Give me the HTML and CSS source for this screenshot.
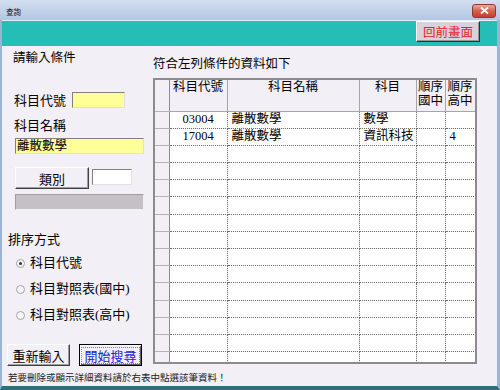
FILE: index.html
```html
<!DOCTYPE html>
<html lang="zh-Hant">
<head>
    <meta charset="UTF-8">
    <title>查詢</title>
    <link rel="stylesheet" href="styles.css">
</head>
<body>
    <div class="window">
        <div class="titlebar">
            <span class="title">查詢</span>
            <span class="close">
                <svg width="9" height="7" viewBox="0 0 9 7"><path d="M1 0.5 L8 6.5 M8 0.5 L1 6.5" stroke="#fff" stroke-width="1.8"/></svg>
            </span>
        </div>
        <div class="client">
            <div class="toolbar">
                <button class="back-btn">回前畫面</button>
            </div>
            <div class="main">
                <div class="left">
                    <div class="cond-title">請輸入條件</div>
                    <div class="code-row">
                        <span>科目代號</span>
                        <span class="input code-input"></span>
                    </div>
                    <div class="name-label">科目名稱</div>
                    <div class="input name-input">離散數學</div>
                    <div class="cat-row">
                        <button class="btn cat-btn">類別</button>
                        <span class="white-box"></span>
                    </div>
                    <div class="gray-bar"></div>
                    <div class="sort-title">排序方式</div>
                    <div class="radios">
                        <div class="radio"><span class="dot checked"></span>科目代號</div>
                        <div class="radio"><span class="dot"></span>科目對照表(國中)</div>
                        <div class="radio"><span class="dot"></span>科目對照表(高中)</div>
                    </div>
                    <div class="actions">
                        <button class="btn action-btn">重新輸入</button>
                        <button class="btn action-btn search-btn"><span>開始搜尋</span></button>
                    </div>
                </div>
                <div class="right">
                    <div class="result-title">符合左列條件的資料如下</div>
                    <div class="grid">
                        <table>
                            <colgroup>
                                <col style="width:14px">
                                <col style="width:58px">
                                <col style="width:132px">
                                <col style="width:57px">
                                <col style="width:29px">
                                <col style="width:30px">
                            </colgroup>
                            <thead>
                                <tr>
                                    <th class="sel"></th>
                                    <th>科目代號</th>
                                    <th>科目名稱</th>
                                    <th>科目</th>
                                    <th>順序<br>國中</th>
                                    <th>順序<br>高中</th>
                                </tr>
                            </thead>
                            <tbody id="rows"></tbody>
                        </table>
                    </div>
                </div>
            </div>
            <div class="footer">若要刪除或顯示詳細資料請於右表中點選該筆資料！</div>
        </div>
    </div>
    <script>
        const data = [
            ['03004', '離散數學', '數學', '', ''],
            ['17004', '離散數學', '資訊科技', '', '4']
        ];
        const tbody = document.getElementById('rows');
        for (let i = 0; i < 15; i++) {
            const row = data[i] || ['', '', '', '', ''];
            const tr = document.createElement('tr');
            tr.innerHTML = '<td class="sel"></td>' +
                `<td class="num">${row[0]}</td>` +
                `<td>${row[1]}</td>` +
                `<td>${row[2]}</td>` +
                `<td>${row[3]}</td>` +
                `<td>${row[4]}</td>`;
            tbody.appendChild(tr);
        }
    </script>
</body>
</html>
```

FILE: styles.css
```css
body {
    margin: 0;
    font-family: "Liberation Serif", "Noto Sans CJK TC", serif;
    color: #000;
}

.window {
    width: 500px;
    height: 390px;
    background: #a9bfdc;
    display: flex;
    flex-direction: column;
    overflow: hidden;
}

.titlebar {
    height: 20px;
    flex-shrink: 0;
    display: flex;
    align-items: center;
    justify-content: space-between;
    padding: 0 4px 0 6px;
    background: linear-gradient(#d3dff0, #b3c6e2);
    box-sizing: border-box;
}

.title {
    font-family: "Noto Sans CJK TC", sans-serif;
    font-size: 7.5px;
    color: #1a1a1a;
    margin-top: 2px;
}

.close {
    width: 24px;
    height: 14px;
    flex-shrink: 0;
    margin-top: 1px;
    border: 1px solid #8a3a32;
    border-radius: 3px;
    box-sizing: border-box;
    background: linear-gradient(#eba899, #d5604e 50%, #c4402e);
    display: flex;
    align-items: center;
    justify-content: center;
}

.client {
    height: 370px;
    flex-shrink: 0;
    display: flex;
    flex-direction: column;
    background: #f3eff7;
    border-left: 2px solid #9cb4d2;
    border-right: 3px solid #9cb4d2;
    border-bottom: 4px solid #2f6f7c;
    box-sizing: border-box;
}

.toolbar {
    height: 26px;
    flex-shrink: 0;
    background: #26bdb7;
    border-top: 1px solid #e6eef8;
    box-sizing: border-box;
    display: flex;
    justify-content: flex-end;
    padding: 0 17px 0 0;
}

.back-btn {
    width: 64px;
    height: 21px;
    padding: 0;
    font-family: "Noto Sans CJK TC", sans-serif;
    font-size: 12.5px;
    color: #e8202a;
    background: #dad2da;
    border: 1px solid;
    border-color: #fff #303030 #303030 #fff;
    box-shadow: inset -1px -1px #9a949a;
}

.main {
    height: 322px;
    flex-shrink: 0;
    display: flex;
}

.left {
    width: 151px;
    flex-shrink: 0;
    font-size: 13px;
    line-height: 16px;
}

.cond-title {
    margin: 4px 0 0 11px;
    font-size: 12.5px;
}

.code-row {
    margin-top: 24px;
    padding-left: 12px;
    display: flex;
    align-items: center;
}

.code-row span:first-child {
    margin-top: 3px;
}

.input {
    background: #ffff99;
    border: 1px solid;
    border-color: #808080 #e0e0e0 #e0e0e0 #808080;
    box-sizing: border-box;
    height: 16px;
}

.code-input {
    width: 53px;
    margin-left: 6px;
}

.name-label {
    margin: 9px 0 0 12px;
}

.name-input {
    width: 129px;
    margin: 4px 0 0 13px;
    font-size: 12.5px;
    line-height: 14px;
    padding-left: 1px;
}

.cat-row {
    margin: 13px 0 0 13px;
    display: flex;
    align-items: flex-start;
}

.btn {
    height: 22px;
    padding: 0;
    font-family: "Noto Sans CJK TC", sans-serif;
    font-size: 13px;
    color: #000;
    background: #f3eff7;
    border: 1px solid;
    border-color: #fff #404040 #404040 #fff;
    box-shadow: inset -1px -1px #a09ca4;
}

.cat-btn {
    width: 74px;
}

.white-box {
    width: 40px;
    height: 16px;
    margin: 2px 0 0 3px;
    background: #fff;
    border: 1px solid;
    border-color: #808080 #e0e0e0 #e0e0e0 #808080;
    box-sizing: border-box;
}

.gray-bar {
    width: 129px;
    height: 16px;
    margin: 5px 0 0 13px;
    background: #c4c0c6;
    border: 1px solid;
    border-color: #a09ca4 #f0f0f0 #f0f0f0 #a09ca4;
    box-sizing: border-box;
}

.sort-title {
    margin: 22px 0 0 6px;
}

.radios {
    margin-top: 2px;
}

.radio {
    height: 26px;
    display: flex;
    align-items: center;
    padding-left: 14px;
}

.dot {
    width: 9px;
    height: 9px;
    margin-right: 5px;
    border: 1px solid #a4a4a4;
    border-radius: 50%;
    box-sizing: border-box;
    background: #f6f6f6;
    position: relative;
}

.dot.checked::after {
    content: "";
    position: absolute;
    left: 2px;
    top: 2px;
    width: 3px;
    height: 3px;
    border-radius: 50%;
    background: #303030;
}

.actions {
    margin: 16px 0 0 5px;
    display: flex;
    gap: 9px;
}

.action-btn {
    width: 63px;
}

.search-btn {
    color: #2020d8;
    border-color: #000;
    box-shadow: inset 1px 1px #fff, inset -1px -1px #606060;
}

.search-btn span {
    display: inline-block;
    padding: 0 2px;
    line-height: 15px;
    border: 1px dotted #8a8a20;
}

.right {
    flex: 1;
}

.result-title {
    margin-top: 10px;
    font-size: 12.5px;
    line-height: 16px;
}

.grid {
    margin-top: 6px;
    width: 324px;
    height: 286px;
    border: 2px solid #8c8c8c;
    box-sizing: border-box;
    overflow: hidden;
    background: #f3eff7;
}

table {
    width: 320px;
    table-layout: fixed;
    border-collapse: collapse;
    font-size: 12.5px;
}

thead tr {
    height: 31px;
}

th {
    padding: 1px 0 0;
    vertical-align: top;
    font-weight: normal;
    line-height: 13.5px;
    background: #f3eff7;
    border: 1px solid #a8a4ac;
    border-top: none;
}

th:first-child {
    border-left: none;
}

tbody tr {
    height: 17.2px;
}

td {
    padding: 0 0 0 4px;
    line-height: 15px;
    background: #fff;
    border: 1px dotted #6e6e6e;
    white-space: nowrap;
    overflow: hidden;
}

td.num {
    text-align: center;
    padding: 0;
}

td.sel,
th.sel {
    background: #f3eff7;
    border: none;
    border-right: 1px solid #8c8c8c;
    border-bottom: 1px solid #b4b0b8;
}

.footer {
    height: 18px;
    flex-shrink: 0;
    padding-left: 6px;
    font-family: "Noto Sans CJK TC", sans-serif;
    font-size: 9.5px;
    line-height: 18px;
    color: #222;
}
```
